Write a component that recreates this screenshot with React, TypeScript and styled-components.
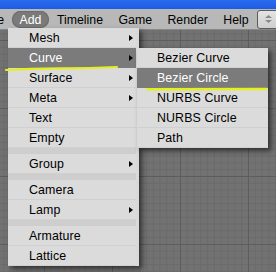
import React from "react";
import styled, { createGlobalStyle } from "styled-components";

const Global = createGlobalStyle`
  html, body { margin: 0; padding: 0; overflow: hidden; background: #737373; }
  #root { width: 276px; height: 272px; }
`;

const Page = styled.div`
  position: relative;
  width: 276px;
  height: 272px;
  display: flex;
  flex-direction: column;
  overflow: hidden;
  font-family: "Liberation Sans", Arial, sans-serif;
  font-size: 12px;
`;

const TitleStrip = styled.div`
  height: 9px;
  flex: none;
  background: linear-gradient(to bottom, #2a6cf0, #1c5ce0);
`;

const Header = styled.div`
  height: 20px;
  flex: none;
  display: flex;
  align-items: center;
  background: #b8b8b8;
  border-bottom: 1px solid #888888;
  white-space: nowrap;
`;

const HeaderItem = styled.div<{ $active?: boolean; $first?: boolean }>`
  height: 17px;
  line-height: 18px;
  padding: 0 7.75px;
  margin-left: ${(p) => (p.$first ? "-23.5px" : "0")};
  border-radius: 9px;
  font-size: 12.3px;
  color: ${(p) => (p.$active ? "#ffffff" : "#000000")};
  background: ${(p) => (p.$active ? "#7a7a7a" : "transparent")};
  box-shadow: ${(p) => (p.$active ? "inset 0 0 0 1px #6c6c6c" : "none")};
`;

const HeaderButton = styled.div`
  margin-left: 1px;
  width: 30px;
  height: 17px;
  flex: none;
  border: 1px solid #5c5c5c;
  border-radius: 3px;
  background: linear-gradient(to bottom, #e4e4e4, #cfcfcf);
  display: flex;
  align-items: center;
  padding-left: 6px;
  box-sizing: content-box;
`;

const Viewport = styled.div`
  flex: 1;
  background-color: #727272;
  background-image:
    linear-gradient(to right, #5d5d5d 1px, transparent 1px),
    linear-gradient(to bottom, #5d5d5d 1px, transparent 1px),
    linear-gradient(to right, #6a6a6a 1px, transparent 1px),
    linear-gradient(to bottom, #6a6a6a 1px, transparent 1px);
  background-size: 68px 68px, 68px 68px, 6.8px 6.8px, 6.8px 6.8px;
  background-position: 44px 10px, 44px 10px, 44px 10px, 44px 10px;
`;

const Menu = styled.div<{ $left: number; $top: number; $width: number; $padRight: number }>`
  position: absolute;
  left: ${(p) => p.$left}px;
  top: ${(p) => p.$top}px;
  width: ${(p) => p.$width}px;
  padding-right: ${(p) => p.$padRight}px;
  box-sizing: border-box;
  background: #d9d9d9;
  box-shadow: 3px 3px 5px rgba(0, 0, 0, 0.55);
  display: flex;
  flex-direction: column;
`;

const Row = styled.div<{ $hi?: boolean; $indent: number }>`
  height: 20px;
  box-sizing: border-box;
  display: flex;
  align-items: center;
  padding-top: 1px;
  padding-left: ${(p) => p.$indent}px;
  padding-right: 3px;
  font-size: 12.4px;
  background: ${(p) => (p.$hi ? "#7b7b7b" : "#dbdbdb")};
  border-bottom: 1px solid ${(p) => (p.$hi ? "#7b7b7b" : "#d0d0d0")};
  color: ${(p) => (p.$hi ? "#ffffff" : "#000000")};
  letter-spacing: 0.1px;
  white-space: nowrap;
`;

const Label = styled.span`
  flex: 1;
`;

const Arrow = styled.span`
  width: 0;
  height: 0;
  border-left: 4px solid #000;
  border-top: 3.5px solid transparent;
  border-bottom: 3.5px solid transparent;
`;

const Separator = styled.div`
  height: 6px;
  background: #cecece;
`;

const Annotation = styled.svg`
  position: absolute;
  left: 0;
  top: 0;
  pointer-events: none;
`;

type Item = { label: string; sub?: boolean; hi?: boolean } | "sep";

const mainItems: Item[] = [
  { label: "Mesh", sub: true },
  { label: "Curve", sub: true, hi: true },
  { label: "Surface", sub: true },
  { label: "Meta", sub: true },
  { label: "Text" },
  { label: "Empty" },
  "sep",
  { label: "Group", sub: true },
  "sep",
  { label: "Camera" },
  { label: "Lamp", sub: true },
  "sep",
  { label: "Armature" },
  { label: "Lattice" },
];

const curveItems: Item[] = [
  { label: "Bezier Curve" },
  { label: "Bezier Circle", hi: true },
  { label: "NURBS Curve" },
  { label: "NURBS Circle" },
  { label: "Path" },
];

function renderItems(items: Item[], indent: number) {
  return items.map((it, i) =>
    it === "sep" ? (
      <Separator key={i} />
    ) : (
      <Row key={i} $hi={it.hi} $indent={indent}>
        <Label>{it.label}</Label>
        {it.sub && <Arrow />}
      </Row>
    )
  );
}

export default function App() {
  return (
    <Page>
      <Global />
      <TitleStrip />
      <Header>
        <HeaderItem $first>File</HeaderItem>
        <HeaderItem $active>Add</HeaderItem>
        <HeaderItem>Timeline</HeaderItem>
        <HeaderItem>Game</HeaderItem>
        <HeaderItem>Render</HeaderItem>
        <HeaderItem>Help</HeaderItem>
        <HeaderButton>
          <svg width="9" height="10" viewBox="0 0 9 10">
            <path d="M1 4 L4.5 1 L8 4 Z" fill="#8a8a8a" />
            <path d="M1 6 L4.5 9 L8 6 Z" fill="#8a8a8a" />
          </svg>
        </HeaderButton>
      </Header>
      <Viewport />
      <Menu $left={8} $top={28} $width={131} $padRight={3}>
        {renderItems(mainItems, 21)}
      </Menu>
      <Menu $left={137} $top={48} $width={131} $padRight={0}>
        {renderItems(curveItems, 20)}
      </Menu>
      <Annotation width="276" height="272" viewBox="0 0 276 272">
        <path
          d="M6 70 Q30 68.6 60 68.4 T117 67"
          stroke="#e4f01c"
          strokeWidth="2.2"
          fill="none"
          strokeLinecap="round"
        />
        <path
          d="M146 89.3 L267 89"
          stroke="#e4f01c"
          strokeWidth="2.6"
          fill="none"
        />
      </Annotation>
    </Page>
  );
}
